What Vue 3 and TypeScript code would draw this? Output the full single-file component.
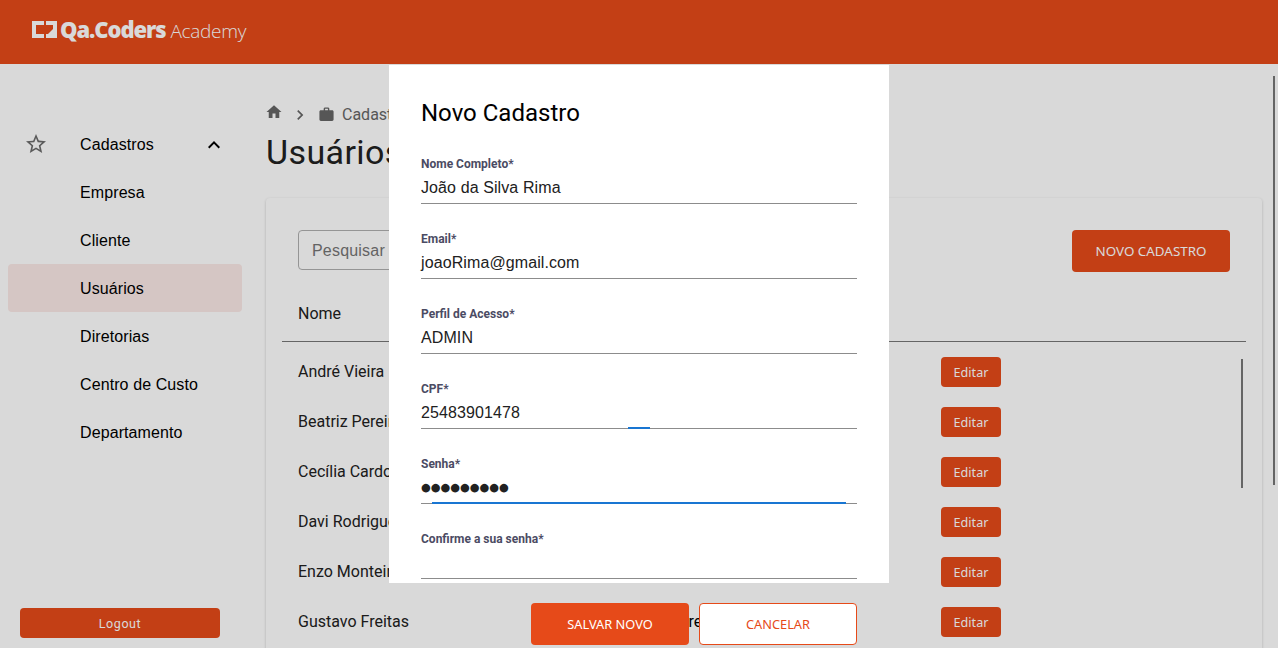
<script setup lang="ts">
const menu = ["Empresa", "Cliente", "Usuários", "Diretorias", "Centro de Custo", "Departamento"];
const users = [
  { nome: "André Vieira", cargo: "" },
  { nome: "Beatriz Pereira", cargo: "" },
  { nome: "Cecília Cardoso", cargo: "" },
  { nome: "Davi Rodrigues", cargo: "" },
  { nome: "Enzo Monteiro", cargo: "" },
  { nome: "Gustavo Freitas", cargo: "Diretor" },
];
const fields = [
  { label: "Nome Completo*", value: "João da Silva Rima", type: "text" },
  { label: "Email*", value: "joaoRima@gmail.com", type: "text" },
  { label: "Perfil de Acesso*", value: "ADMIN", type: "text" },
  { label: "CPF*", value: "25483901478", type: "text", ink: "cpf" },
  { label: "Senha*", value: "●●●●●●●●●", type: "password", ink: "senha" },
  { label: "Confirme a sua senha*", value: "", type: "password" },
];
</script>

<template>
  <div class="page">
    <header class="topbar">
      <div class="logo">
        <svg class="logo-mark" width="25" height="17" viewBox="0 0 25 17">
          <path fill="#fff" d="M0 0h12v4H4v9h8v4H0zM14 0h11v17H14v-4h7V4h-7z" />
          <path fill="#fff" d="M16 13l5-5v5z" />
        </svg>
        <span class="logo-bold">Qa.Coders</span>
        <span class="logo-light">Academy</span>
      </div>
    </header>

    <div class="body">
      <aside class="sidebar">
        <nav class="menu">
          <div class="menu-item parent">
            <svg class="star" width="24" height="24" viewBox="0 0 24 24">
              <path fill="#6b6b6b" d="M22 9.24l-7.19-.62L12 2 9.19 8.63 2 9.24l5.46 4.73L5.82 21 12 17.27 18.18 21l-1.63-7.03L22 9.24zM12 15.4l-3.76 2.27 1-4.28-3.32-2.88 4.38-.38L12 6.1l1.71 4.04 4.38.38-3.32 2.88 1 4.28L12 15.4z" />
            </svg>
            <span>Cadastros</span>
            <svg class="chev" width="24" height="24" viewBox="0 0 24 24">
              <path fill="#000" d="M12 8l-6 6 1.41 1.41L12 10.83l4.59 4.58L18 14z" />
            </svg>
          </div>
          <div v-for="m in menu" :key="m" class="menu-item" :class="{ active: m === 'Usuários' }">{{ m }}</div>
        </nav>
        <button class="logout">Logout</button>
      </aside>

      <main class="content">
        <div class="crumbs">
          <svg class="crumb-home" width="18" height="18" viewBox="0 0 24 24"><path fill="#666" d="M10 20v-6h4v6h5v-8h3L12 3 2 12h3v8z" /></svg>
          <svg class="crumb-sep" width="20" height="20" viewBox="0 0 24 24"><path fill="#666" d="M10 6L8.59 7.41 13.17 12l-4.58 4.59L10 18l6-6z" /></svg>
          <svg class="crumb-bag" width="17" height="17" viewBox="0 0 24 24"><path fill="#666" d="M14 6V4h-4v2h4zM20 6c1.11 0 2 .89 2 2v11c0 1.11-.89 2-2 2H4c-1.11 0-2-.89-2-2V8c0-1.11.89-2 2-2h4V4c0-1.11.89-2 2-2h4c1.11 0 2 .89 2 2v2h4z" /></svg>
          <span>Cadastros</span>
        </div>
        <h1 class="title">Usuários</h1>

        <section class="card">
          <div class="toolbar">
            <div class="search">Pesquisar</div>
            <button class="btn-new">NOVO CADASTRO</button>
          </div>
          <div class="thead"><span>Nome</span></div>
          <div class="tbody">
            <div v-for="u in users" :key="u.nome" class="row">
              <span class="col-name">{{ u.nome }}</span>
              <span class="col-cargo">{{ u.cargo }}</span>
              <button class="btn-edit">Editar</button>
            </div>
            <div class="table-bar"></div>
          </div>
        </section>
      </main>

      <div class="page-bar"></div>
    </div>

    <div class="backdrop">
      <div class="dialog">
        <div class="modal">
          <h2 class="modal-title">Novo Cadastro</h2>
          <div v-for="f in fields" :key="f.label" class="field">
            <label class="field-label">{{ f.label }}</label>
            <div class="field-value" :class="{ dots: f.type === 'password' }">{{ f.value }}</div>
            <div class="field-line">
              <i v-if="f.ink" :class="'ink-' + f.ink"></i>
            </div>
          </div>
        </div>
        <div class="actions">
          <button class="btn-save">SALVAR NOVO</button>
          <button class="btn-cancel">CANCELAR</button>
        </div>
      </div>
    </div>
  </div>
</template>

<style scoped>
.page {
  position: relative;
  width: 1278px;
  height: 648px;
  overflow: hidden;
  background: #fff;
  font-family: Roboto, "Liberation Sans", sans-serif;
  color: #000;
}
button {
  border: 0;
  font-family: "Noto Sans", Roboto, sans-serif;
}
.topbar {
  display: flex;
  align-items: flex-start;
  height: 64px;
  padding: 18px 0 0 32px;
  box-sizing: border-box;
  background: #e64a19;
}
.logo {
  display: flex;
  align-items: baseline;
  gap: 4px;
  color: #fff;
  line-height: 22px;
}
.logo-mark {
  align-self: flex-start;
  margin: 3px 0 0;
}
.logo-bold {
  margin-left: -1px;
  font-family: "Open Sans", sans-serif;
  font-size: 22px;
  font-weight: 800;
  letter-spacing: -1.1px;
}
.logo-light {
  margin-left: 1px;
  font-family: "Open Sans", sans-serif;
  font-size: 19px;
  font-weight: 300;
  letter-spacing: -0.3px;
}
.body {
  display: flex;
  height: 584px;
}
.sidebar {
  display: flex;
  flex-direction: column;
  justify-content: space-between;
  flex: 0 0 250px;
  padding: 56px 8px 0;
  box-sizing: border-box;
  height: 584px;
}
.menu-item {
  display: flex;
  align-items: center;
  box-sizing: border-box;
  height: 48px;
  padding: 2px 0 0 72px;
  border-radius: 4px;
  font-family: "Liberation Sans", Arial, sans-serif;
  font-size: 16px;
  letter-spacing: 0.1px;
}
.menu-item.parent {
  position: relative;
}
.star {
  position: absolute;
  left: 16px;
  top: 12px;
}
.chev {
  position: absolute;
  right: 16px;
  top: 13px;
}
.menu-item.active {
  background: #fbe9e7;
}
.logout {
  align-self: flex-start;
  width: 200px;
  height: 30px;
  margin: 0 0 10px 12px;
  border-radius: 4px;
  background: #e64a19;
  color: #fff;
  font-size: 12.5px;
  font-family: Roboto, sans-serif;
  letter-spacing: 0.6px;
}
.content {
  flex: 1;
  padding: 0 0 0 16px;
  min-width: 0;
}
.crumbs {
  display: flex;
  align-items: center;
  height: 24px;
  margin-top: 38px;
  color: #666;
  font-size: 16px;
}
.crumb-home {
  margin: -5px 0 0 -1px;
}
.crumb-sep {
  margin: 2px 0 0 7px;
}
.crumb-bag {
  margin: 0 7px 0 8px;
}
.title {
  margin: 4px 0 0;
  font-size: 34px;
  font-weight: 400;
  line-height: 44px;
  color: #212121;
  letter-spacing: 0.4px;
}
.card {
  width: 996px;
  height: 520px;
  margin-top: 24px;
  border-radius: 4px;
  background: #fff;
  box-shadow: 0 1px 3px rgba(0, 0, 0, 0.2);
}
.toolbar {
  display: flex;
  justify-content: space-between;
  padding: 32px 32px 0;
}
.search {
  box-sizing: border-box;
  width: 300px;
  height: 40px;
  padding: 1px 13px 0;
  border: 1px solid #b0b0b0;
  border-radius: 4px;
  font-family: "Liberation Sans", Arial, sans-serif;
  font-size: 16px;
  letter-spacing: 0.2px;
  line-height: 38px;
  color: #757575;
}
.btn-new {
  width: 158px;
  height: 42px;
  border-radius: 4px;
  background: #e64a19;
  color: #fff;
  font-size: 13.4px;
}
.thead {
  margin: 30px 16px 0;
  height: 39px;
  padding: 0 16px;
  border-bottom: 1px solid #777;
  font-size: 16px;
  line-height: 24px;
  color: #212121;
}
.tbody {
  position: relative;
  padding-top: 5px;
}
.row {
  display: flex;
  align-items: center;
  height: 50px;
  padding-left: 32px;
  font-size: 16px;
  color: #212121;
}
.col-name,
.col-cargo {
  padding-bottom: 2px;
}
.col-name {
  flex: 0 0 376px;
}
.col-cargo {
  flex: 0 0 267px;
  color: #000;
}
.btn-edit {
  width: 60px;
  height: 30px;
  border-radius: 4px;
  background: #e64a19;
  color: #fff;
  font-size: 12.6px;
}
.table-bar {
  position: absolute;
  left: 975px;
  top: 17px;
  width: 2px;
  height: 129px;
  background: #777;
}
.page-bar {
  position: absolute;
  right: 3px;
  top: 76px;
  width: 2px;
  height: 409px;
  background: #777;
}
.backdrop {
  position: absolute;
  inset: 0;
  background: rgba(0, 0, 0, 0.15);
}
.dialog {
  position: absolute;
  left: 389px;
  top: 65px;
  width: 500px;
}
.modal {
  box-sizing: border-box;
  height: 518px;
  padding: 32px 32px 0;
  overflow: hidden;
  background: #fff;
}
.modal-title {
  margin: 0 0 27px;
  font-size: 24px;
  font-weight: 400;
  line-height: 32px;
}
.field {
  height: 75px;
}
.field-label {
  display: block;
  height: 16px;
  font-size: 12px;
  font-weight: 700;
  line-height: 16px;
  color: #4b4b63;
}
.field-value {
  height: 24px;
  margin-top: 4px;
  font-family: "Liberation Sans", Arial, sans-serif;
  font-size: 16px;
  letter-spacing: 0.1px;
  line-height: 24px;
  color: #212121;
}
.field-value.dots {
  font-family: "DejaVu Sans", sans-serif;
  font-size: 11.2px;
  letter-spacing: 0;
}
.field-line {
  position: relative;
  height: 1px;
  margin-top: 3px;
  background: #8c8c8c;
}
.ink-cpf,
.ink-senha {
  position: absolute;
  top: -1px;
  height: 2px;
  background: #1976d2;
}
.ink-cpf {
  left: 207px;
  width: 22px;
}
.ink-senha {
  left: 11px;
  width: 414px;
}
.actions {
  display: flex;
  justify-content: flex-end;
  gap: 10px;
  padding: 20px 32px 0;
}
.btn-save,
.btn-cancel {
  width: 158px;
  height: 42px;
  border-radius: 4px;
  font-size: 12.8px;
}
.btn-save {
  background: #e64a19;
  color: #fff;
}
.btn-cancel {
  background: #fff;
  color: #e64a19;
  border: 1px solid #e64a19;
}
</style>

<style>
html,
body {
  margin: 0;
  overflow: hidden;
}
</style>
